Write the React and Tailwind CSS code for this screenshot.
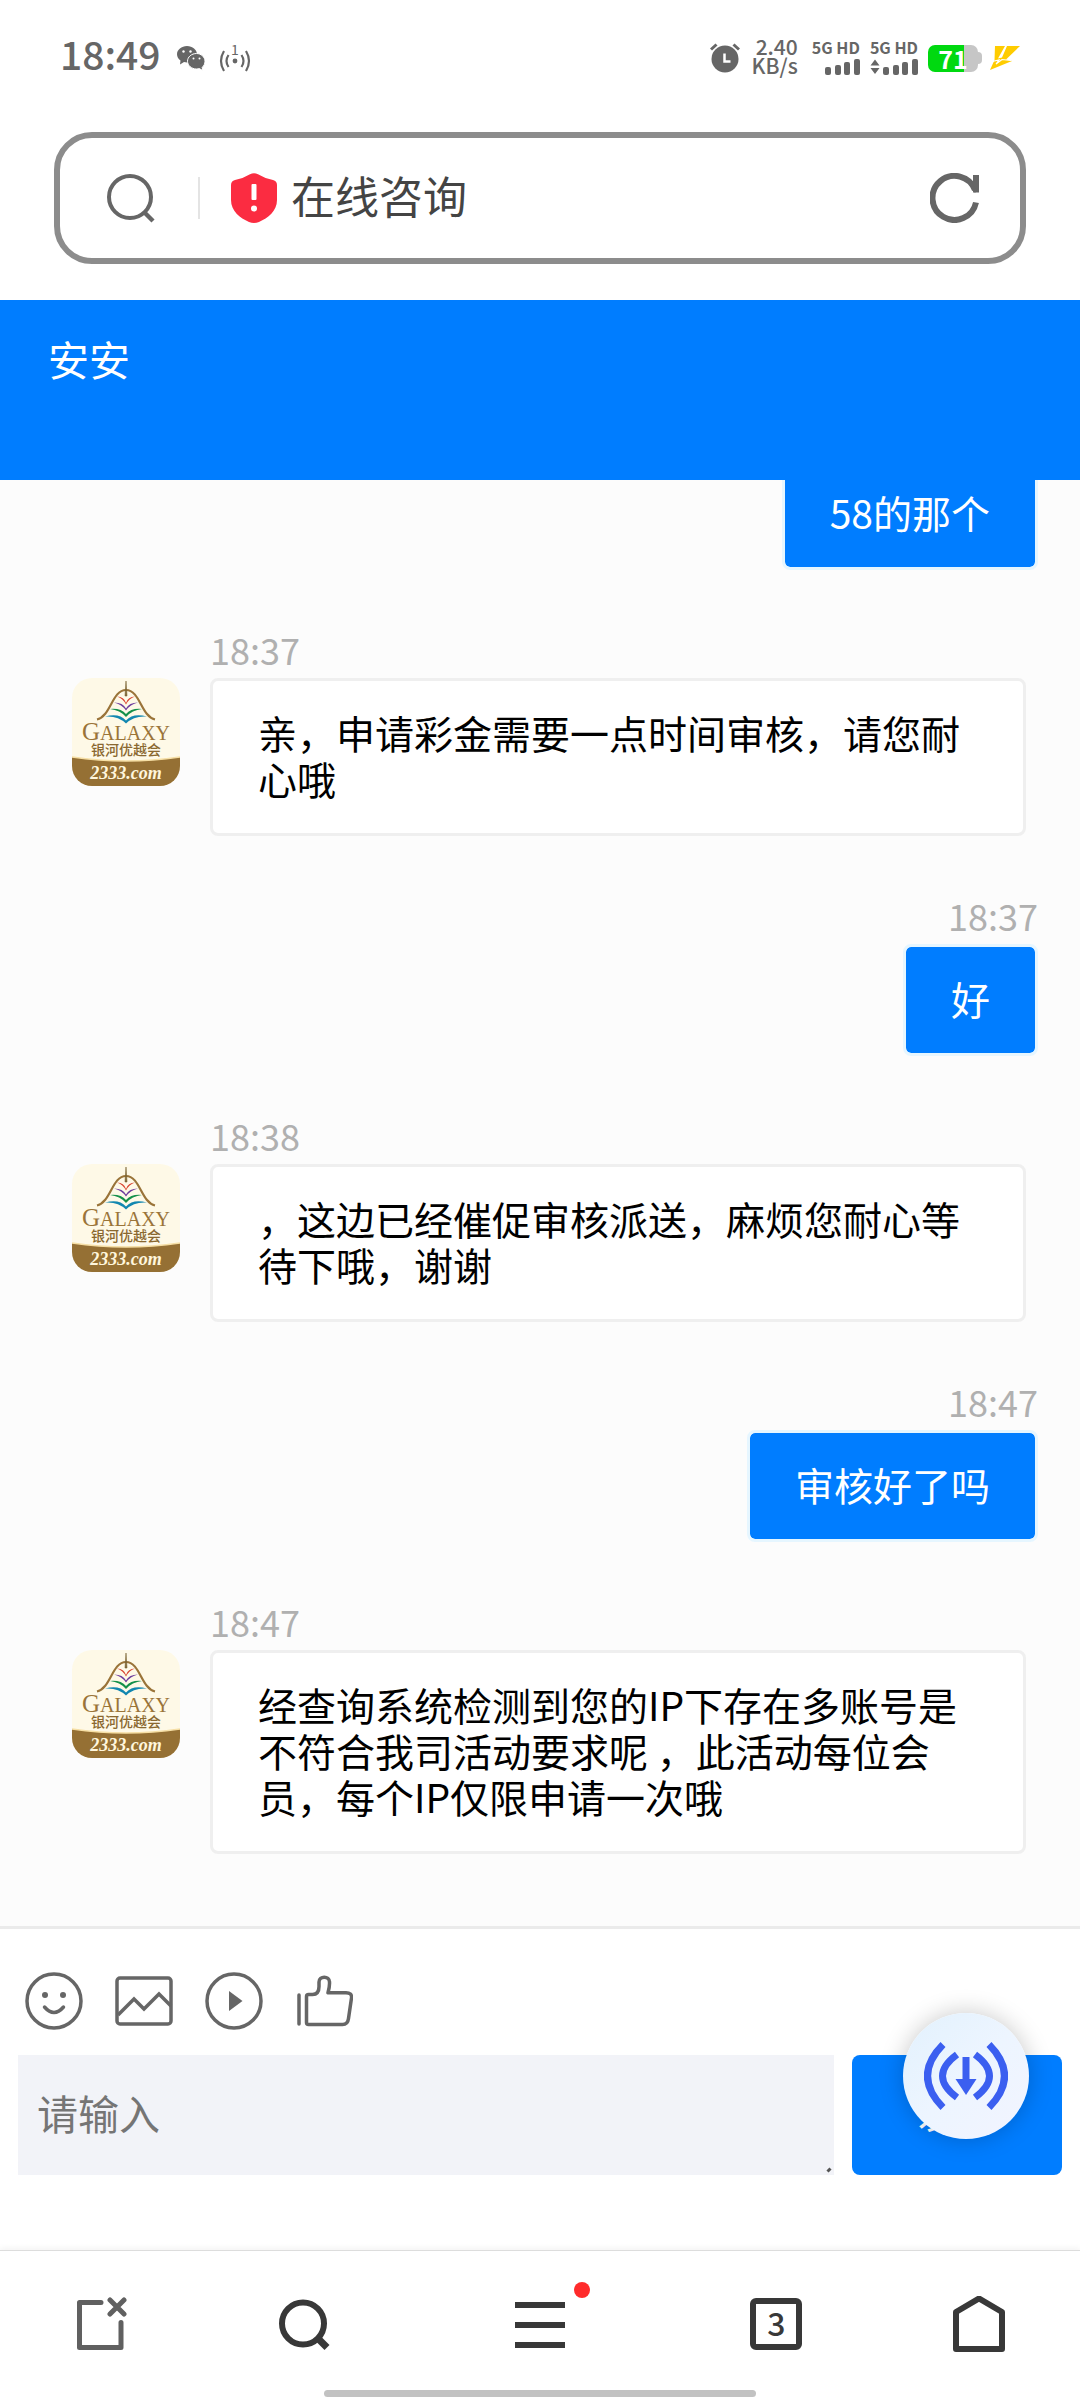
import { clsx } from 'clsx'

const MESSAGES = [
  { id: 1, from: 'me', text: '58的那个' },
  { id: 2, from: 'agent', time: '18:37', text: '亲，申请彩金需要一点时间审核，请您耐心哦' },
  { id: 3, from: 'me', time: '18:37', text: '好' },
  { id: 4, from: 'agent', time: '18:38', text: '，这边已经催促审核派送，麻烦您耐心等待下哦，谢谢' },
  { id: 5, from: 'me', time: '18:47', text: '审核好了吗' },
  {
    id: 6,
    from: 'agent',
    time: '18:47',
    text: '经查询系统检测到您的IP下存在多账号是不符合我司活动要求呢 ，此活动每位会员，每个IP仅限申请一次哦',
  },
]

const TOOLS = [
  { label: '表情', icon: SmileIcon },
  { label: '图片', icon: ImageIcon },
  { label: '视频', icon: PlayIcon },
  { label: '评价', icon: ThumbIcon },
]

function WechatIcon() {
  return (
    <svg viewBox="0 0 28 26" className="h-[26px] w-7" fill="#666" aria-hidden="true">
      <path d="M10 1C4.500 1 0 4.700 0 9.300c0 2.500 1.300 4.700 3.500 6.200L3 19.500l4-2.400c1 .3 2 .4 3 .4 5.500 0 10-3.700 10-8.200S15.500 1 10 1Z" />
      <path d="M19.500 8.500c-5 0-9 3.500-9 7.700s4 7.800 9 7.800c1 0 2-.1 2.900-.4l3.400 2-.6-3.300c1.800-1.400 2.800-3.600 2.800-6.100 0-4.200-4-7.700-8.500-7.700Z" stroke="#fff" strokeWidth="1" />
      <g fill="#fff">
        <circle cx="6.500" cy="6.500" r="1.200" />
        <circle cx="13.500" cy="6.500" r="1.200" />
        <circle cx="16.500" cy="13.500" r="1" />
        <circle cx="22.500" cy="13.500" r="1" />
      </g>
    </svg>
  )
}

function HotspotIcon() {
  return (
    <svg viewBox="0 0 32 28" className="h-7 w-8 overflow-visible" fill="none" stroke="#666" strokeWidth="2.200" aria-hidden="true">
      <path d="M5 7Q-1 17 5 27M27 7q6 10 0 20M9.500 11q-4 6 0 12M22.500 11q4 6 0 12" />
      <circle cx="16" cy="17" r="2.400" fill="#666" stroke="none" />
      <text x="16" y="11" fontSize="14" textAnchor="middle" fill="#666" stroke="none">1</text>
    </svg>
  )
}

function AlarmIcon() {
  return (
    <svg viewBox="0 0 30 30" className="size-[30px]" aria-hidden="true">
      <circle cx="15" cy="16" r="13.500" fill="#666" />
      <path d="M1 6.500 6.500 1.500M29 6.500l-5.500-5" stroke="#666" strokeWidth="3" />
      <path d="M14.500 10.500v8h6" stroke="#fff" strokeWidth="2.500" fill="none" />
    </svg>
  )
}

function Signal({ busy }) {
  return (
    <div className="flex flex-col items-end">
      <span className="text-[16px] leading-[14px] font-bold whitespace-nowrap">5G HD</span>
      <svg viewBox="0 0 48 17" className="mt-1 h-[17px] w-12" fill="#666" aria-hidden="true">
        {busy && <path d="M5 1.500 9.500 7.500H0.500ZM5 16 9.500 10H0.500Z" />}
        <rect x="13" y="9" width="6" height="8" rx="2" />
        <rect x="23" y="7" width="6" height="10" rx="2" />
        <rect x="32" y="4" width="6" height="13" rx="2" />
        <rect x="42" y="1" width="6" height="16" rx="2" />
      </svg>
    </div>
  )
}

function Battery() {
  return (
    <div className="flex items-center">
      <div className="h-[27px] w-[50px] rounded-[7px] bg-linear-to-r from-[#00d910] from-72% to-[#c6c6c6] to-72% text-center text-[25px] leading-[26px] font-bold text-white">
        71
      </div>
      <div className="h-3 w-1 rounded-r-sm bg-[#c6c6c6]" />
    </div>
  )
}

function StatusBar() {
  return (
    <div className="flex h-[132px] items-start justify-between px-[60px] pt-9 text-[#666]">
      <div className="flex h-11 items-center">
        <span className="pb-2.5 text-[39px] leading-10 font-medium">18:49</span>
        <span className="ml-4"><WechatIcon /></span>
        <span className="ml-3.5"><HotspotIcon /></span>
      </div>
      <div className="flex h-11 items-center">
        <AlarmIcon />
        <div className="ml-3 pb-1 text-right text-[21px] leading-[19px] font-medium">
          <p>2.40</p>
          <p>KB/s</p>
        </div>
        <div className="ml-3.5 flex gap-2.5 pb-0.5">
          <Signal />
          <Signal busy />
        </div>
        <div className="ml-2.5"><Battery /></div>
        <svg viewBox="0 0 30 25" className="ml-2 h-[25px] w-[30px]" fill="#fc0" aria-hidden="true">
          <path d="M5 0h10L8 12.500l4-1L17 0h13L16 13.500l6 1.500L0 24 4.500 14Z" />
          <path d="M2 15.500 9 14 6 18l6-4.500 9 1" stroke="#fff" strokeWidth="1.200" fill="none" />
        </svg>
      </div>
    </div>
  )
}

function AddressBar() {
  return (
    <div className="mx-[54px] mb-9 flex h-[132px] items-center rounded-[38px] border-6 border-[#8c8c8c] bg-white pr-10 pl-[47px]">
      <svg viewBox="0 0 48 50" className="h-[50px] w-12" fill="none" stroke="#666" strokeWidth="4" aria-hidden="true">
        <circle cx="23" cy="24" r="21" />
        <path d="m38 40 8 8" strokeWidth="4.500" />
      </svg>
      <div className="ml-[43px] h-[42px] w-0.5 bg-[#e4e4e4]" />
      <svg viewBox="0 0 46 50" className="ml-[31px] h-[50px] w-[46px]" aria-hidden="true">
        <path d="M19 1.200Q23-.8 27 1.200 34 5.500 42 7q4 1 4 5v15c0 11-9 18-18 22q-5 2-10 0C9 45 0 38 0 27V12q0-4 4-5 8-1.500 15-5.800Z" fill="#fb2c41" />
        <rect x="20.500" y="11" width="5" height="16" rx="1" fill="#fff" />
        <circle cx="23" cy="35.500" r="3" fill="#fff" />
      </svg>
      <span className="ml-3.5 flex-1 pb-1.5 text-[44px] leading-[60px] text-[#444]">在线咨询</span>
      <button type="button" aria-label="刷新">
        <svg viewBox="0 0 50 50" className="size-[50px]" fill="none" stroke="#666" strokeWidth="6">
          <path d="M46 29.500A22 22 0 1 1 45 17" />
          <path d="M46 2v17.500" />
          <path d="m38 7 8 12" strokeWidth="3" />
        </svg>
      </button>
    </div>
  )
}

function Avatar() {
  return (
    <svg viewBox="0 0 108 108" className="size-[108px] shrink-0 rounded-[20px]" role="img" aria-label="客服头像">
      <rect width="108" height="108" fill="#fef9e7" />
      <path d="M0 79q54 8 108 0v29H0Z" fill="#957034" />
      <path d="M0 79q54 8 108 0" stroke="#f6dfa5" strokeWidth="1.500" fill="none" />
      <path d="M54 12C40 12 39 38 25 41.500M54 12c14 0 15 26 29 29.500" strokeWidth="2.200" fill="none" stroke="#9a7439" />
      <path d="M54 3l1 15h-2Z" fill="#7c6535" stroke="#7c6535" strokeWidth=".6" />
      <path d="M45 18.500q7 0 9 6.500 2-6.500 9-6.500-6 2-9 8-3-6-9-8Z" fill="#d9432f" />
      <path d="M42 24.500q9 0 12 6 3-6 12-6-8 2-12 8-4-6-12-8Z" fill="#6d3b9c" />
      <path d="M38 31q11-1 16 5 5-6 16-5-10 1-16 8-6-7-16-8Z" fill="#15904a" />
      <path d="M33 38.500q14-4 21 4 7-8 21-4-13-1-21 7-8-8-21-7Z" fill="#1287b0" />
      <text x="54" y="62" fontSize="20" textAnchor="middle" fill="#9a7439" fontFamily="Liberation Serif, serif">
        <tspan fontSize="25">G</tspan>ALAXY
      </text>
      <text x="54" y="77" fontSize="14" fontWeight="500" textAnchor="middle" fill="#8a6830">银河优越会</text>
      <text x="54" y="101" fontSize="18" fontWeight="700" fontStyle="italic" textAnchor="middle" fill="#fff6dc" fontFamily="Liberation Serif, serif">
        2333.com
      </text>
    </svg>
  )
}

function Message({ from, time, text }) {
  const mine = from === 'me'
  return (
    <li className={clsx('flex', mine ? 'justify-end pr-[42px]' : 'gap-[30px] pr-[54px] pl-[72px]')}>
      {!mine && <div className="pt-12"><Avatar /></div>}
      <div className={clsx('flex flex-col', mine ? 'items-end' : 'flex-1 items-start')}>
        {time && <time className="mb-2.5 text-[36px] leading-[38px] text-[#b0b0b0]">{time}</time>}
        <p
          className={clsx(
            'rounded-lg border-3 bg-clip-padding px-[45px] pt-7 pb-8 text-[39px] leading-[46px]',
            mine ? 'border-[#e6f6ff] bg-[#007dff] text-white' : 'w-full border-[#efefef] bg-white text-black'
          )}
        >
          {text}
        </p>
      </div>
    </li>
  )
}

function SmileIcon() {
  return (
    <svg viewBox="0 0 58 58" className="size-[58px]" fill="none" stroke="#666" strokeWidth="3.500">
      <circle cx="29" cy="29" r="27" />
      <path d="M19.500 35q9.500 11 19 0" strokeLinecap="round" />
      <circle cx="20" cy="23" r="3" fill="#666" stroke="none" />
      <circle cx="38" cy="23" r="3" fill="#666" stroke="none" />
    </svg>
  )
}

function ImageIcon() {
  return (
    <svg viewBox="0 0 58 58" className="size-[58px]" fill="none" stroke="#666" strokeWidth="3.500">
      <rect x="2" y="6" width="54" height="46" rx="3" />
      <path d="m3 43 16-16 10 10 15-15 12 12" />
    </svg>
  )
}

function PlayIcon() {
  return (
    <svg viewBox="0 0 58 58" className="size-[58px]" fill="none" stroke="#666" strokeWidth="3.500">
      <circle cx="29" cy="29" r="27" />
      <path d="m24 19 13.500 10L24 39Z" fill="#666" stroke="none" />
    </svg>
  )
}

function ThumbIcon() {
  return (
    <svg viewBox="0 0 58 58" className="size-[58px]" fill="none" stroke="#666" strokeWidth="3.500" strokeLinejoin="round">
      <path d="M4 23v29" strokeLinecap="round" />
      <path d="M13.500 22.500h4c5 0 6.500-3 6.500-8V10c0-6.500 10.500-6.500 10.500 0 .3 4-.5 7-1.500 10.700h18c4 0 6 2 5.500 5.300l-3 20.500c-.5 4-2 6-6 6H13.500Q11.500 52.500 11.500 50.500V24.500Q11.500 22.500 13.500 22.500Z" />
    </svg>
  )
}

function Composer() {
  return (
    <form className="border-t-3 border-[#ebebeb] bg-white px-[18px] pt-[43px] pb-[75px]" onSubmit={(e) => e.preventDefault()}>
      <div className="flex gap-8 px-[7px]">
        {TOOLS.map(({ label, icon: Icon }) => (
          <button key={label} type="button" aria-label={label}>
            <Icon />
          </button>
        ))}
      </div>
      <div className="mt-[25px] flex h-[120px] gap-[18px]">
        <div className="relative flex-1">
          <textarea
            aria-label="消息"
            placeholder="请输入"
            className="block size-full resize-none bg-[#f2f3f8] px-[19px] pt-7 text-[41px] leading-[58px] text-[#333] outline-none placeholder:text-[#757575]"
          />
          <svg viewBox="0 0 6 6" className="absolute right-0.5 bottom-0.5 size-1.5" aria-hidden="true">
            <path d="M1.500 4.500l3-3" stroke="#555" strokeWidth="3" />
          </svg>
        </div>
        <div className="relative w-[210px]">
          <button type="submit" className="size-full rounded-lg bg-[#007dff] pb-2 text-[39px] leading-[46px] text-white">
            发送
          </button>
          {/* floating assistant ball */}
          <button
            type="button"
            aria-label="悬浮球"
            className="absolute -top-[42px] left-[51px] flex size-[126px] items-center justify-center rounded-full bg-linear-to-br from-[#e2f1fd] via-[#edf5ff] to-[#f2f4ff] shadow-[0_0_24px_rgba(0,0,0,0.22)]"
          >
            <svg viewBox="0 0 84 68" className="h-[68px] w-21" fill="none" stroke="#3b5ff0" strokeWidth="7">
              <path d="M19 2.500Q-12 34 19 65.500M65 2.500q31 31.500 0 63" />
              <path d="M33 12.500q-29 21.500 0 43M51 12.500q29 21.500 0 43" />
              <path d="M42 15v24" />
              <path d="M31.500 37h21L42 53Z" fill="#3b5ff0" stroke="none" />
            </svg>
          </button>
        </div>
      </div>
    </form>
  )
}

function BottomNav() {
  return (
    <nav className="border-t border-[#ddd] bg-white shadow-[0_-2px_6px_rgba(0,0,0,0.05)]">
      <div className="grid h-[139px] grid-cols-[3fr_3fr_4fr_3fr_3fr] place-items-center *:pt-1.5">
        <button type="button" aria-label="关闭标签页">
          <svg viewBox="0 0 52 56" className="h-14 w-13" fill="none" stroke="#606060" strokeWidth="5" strokeLinecap="round" strokeLinejoin="round">
            <path d="M26 6.500H4.500v45H46v-25" />
            <path d="m35 4 14 14M49 4 35 18" />
          </svg>
        </button>
        <button type="button" aria-label="搜索">
          <svg viewBox="0 0 52 56" className="h-14 w-13" fill="none" stroke="#383838" strokeWidth="6">
            <circle cx="25" cy="27.500" r="21" />
            <path d="m40 42.500 9 9" strokeWidth="7" />
          </svg>
        </button>
        <button type="button" aria-label="菜单" className="relative">
          <svg viewBox="0 0 52 56" className="h-14 w-13" stroke="#383838" strokeWidth="6">
            <path d="M1 9h50M1 29h50M1 49h50" />
          </svg>
          <span className="absolute -top-2 -right-6 size-4 rounded-full bg-[#ff2b2b]" />
        </button>
        <button type="button" aria-label="标签页">
          <span className="flex size-13 items-center justify-center rounded-md border-6 border-[#383838] pb-1 text-[32px] leading-9 font-medium text-[#383838]">
            3
          </span>
        </button>
        <button type="button" aria-label="主页">
          <svg viewBox="0 0 52 56" className="h-14 w-13" fill="none" stroke="#383838" strokeWidth="6" strokeLinejoin="round">
            <path d="M3 16 26 2.500 49 16v37H3Z" />
          </svg>
        </button>
      </div>
      <div className="mx-auto mb-[3px] h-[7px] w-2/5 rounded-full bg-[#c2c2c2]" />
    </nav>
  )
}

export default function App() {
  return (
    <div className="flex h-screen flex-col bg-white font-['Noto_Sans_CJK_SC',sans-serif]">
      <StatusBar />
      <AddressBar />
      <header className="h-[180px] shrink-0 bg-[#007dff] px-12 pt-[29px]">
        <h1 className="text-[41px] leading-[58px] text-white">安安</h1>
      </header>
      <main className="flex min-h-0 flex-1 flex-col justify-end overflow-hidden bg-[#fcfcfc]">
        <ul className="flex flex-col gap-15 pb-18">
          {MESSAGES.map(({ id, ...msg }) => (
            <Message key={id} {...msg} />
          ))}
        </ul>
      </main>
      <Composer />
      <BottomNav />
    </div>
  )
}
